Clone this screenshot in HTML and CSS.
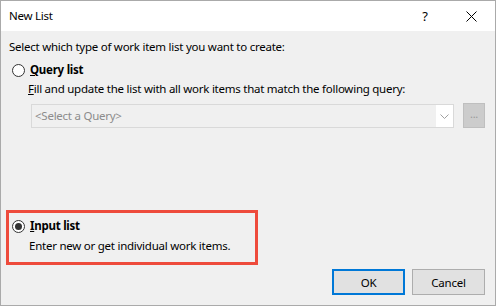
FILE: index.html
```html
<!DOCTYPE html>
<html>
<head>
<meta charset="utf-8">
<link rel="stylesheet" href="styles.css">
</head>
<body>
<div class="dialog">
  <div class="titlebar">
    <span class="title">New List</span>
    <span class="help">?</span>
    <span class="close">
      <svg width="11" height="11" viewBox="0 0 11 11"><path d="M0.5 0.5 L10.5 10.5 M10.5 0.5 L0.5 10.5" stroke="#000" stroke-width="1" fill="none"/></svg>
    </span>
  </div>
  <div class="content">
    <div class="intro">Select which type of work item list you want to create:</div>
    <div class="option">
      <span class="radio"></span>
      <span class="label"><u>Q</u>uery list</span>
    </div>
    <div class="sub">
      <div class="desc"><u>F</u>ill and update the list with all work items that match the following query:</div>
      <div class="query-row">
        <div class="combo">
          <span class="combo-text">&lt;Select a Query&gt;</span>
          <span class="combo-btn">
            <svg width="9" height="5" viewBox="0 0 9 5"><path d="M0.5 0.5 L4.5 4.5 L8.5 0.5" stroke="#a0a0a0" stroke-width="1" fill="none"/></svg>
          </span>
        </div>
        <div class="ellipsis">...</div>
      </div>
    </div>
    <div class="spacer"></div>
    <div class="highlight">
      <div class="option option-input">
        <span class="radio checked"></span>
        <span class="label"><u>I</u>nput list</span>
      </div>
      <div class="desc2">Enter new or get individual work items.</div>
    </div>
    <div class="buttons">
      <div class="btn btn-default">OK</div>
      <div class="btn">Cancel</div>
    </div>
  </div>
</div>
</body>
</html>
```

FILE: styles.css
```css
html, body {
  margin: 0;
  padding: 0;
}
body {
  width: 496px;
  height: 306px;
  font-family: "Noto Sans", "DejaVu Sans", sans-serif;
  font-size: 11.5px;
  letter-spacing: -0.25px;
  color: #000;
}
.dialog {
  box-sizing: border-box;
  width: 496px;
  height: 306px;
  border: 1px solid #aaaaaa;
  background: #f0f0f0;
  display: flex;
  flex-direction: column;
}
.titlebar {
  height: 30px;
  background: #fff;
  display: flex;
  align-items: center;
  padding-left: 8px;
  flex: none;
}
.title {
  flex: 1;
  line-height: 16px;
  margin-top: -1px;
}
.help {
  width: 14px;
  text-align: center;
  margin-right: 34px;
  font-size: 13px;
}
.close {
  display: flex;
  margin-right: 18px;
}
.content {
  flex: 1;
  display: flex;
  flex-direction: column;
  padding: 8px 10px 10px 8px;
}
.intro {
  line-height: 16px;
}
.option {
  display: flex;
  align-items: center;
  margin-top: 7px;
  padding-left: 3px;
  height: 16px;
}
.radio {
  box-sizing: border-box;
  width: 13px;
  height: 13px;
  border: 1px solid #333;
  border-radius: 50%;
  background: #fff;
  margin-right: 5px;
  display: flex;
  align-items: center;
  justify-content: center;
  flex: none;
}
.radio.checked::after {
  content: "";
  width: 7px;
  height: 7px;
  border-radius: 50%;
  background: #333;
}
.label {
  font-weight: bold;
  line-height: 16px;
}
.sub {
  margin-left: 19px;
  margin-top: 3px;
}
.desc {
  line-height: 16px;
}
.query-row {
  display: flex;
  margin-top: 7px;
  margin-left: 3px;
  align-items: flex-start;
}
.combo {
  box-sizing: border-box;
  width: 424px;
  height: 24px;
  border: 1px solid #d9d9d9;
  background: #f0f0f0;
  display: flex;
  align-items: stretch;
}
.combo-text {
  flex: 1;
  color: #8c8c8c;
  line-height: 22px;
  padding-left: 3px;
}
.combo-btn {
  width: 17px;
  background: #fff;
  display: flex;
  align-items: center;
  justify-content: center;
}
.ellipsis {
  box-sizing: border-box;
  width: 22px;
  height: 25px;
  margin-top: -1px;
  margin-left: 9px;
  background: #cccccc;
  border: 1px solid #bfbfbf;
  color: #9a9a9a;
  text-align: center;
  line-height: 20px;
  font-size: 11px;
}
.spacer {
  flex: 1;
}
.highlight {
  box-sizing: border-box;
  width: 252px;
  height: 55px;
  margin-left: -3px;
  border: 3px solid #ee4b3c;
  padding-top: 5px;
}
.option-input {
  margin-top: 0;
}
.desc2 {
  margin-left: 20px;
  margin-top: 4px;
  line-height: 16px;
}
.buttons {
  display: flex;
  justify-content: flex-end;
  gap: 7px;
  margin-top: 4px;
}
.btn {
  box-sizing: border-box;
  width: 73px;
  height: 26px;
  background: #e1e1e1;
  border: 1px solid #adadad;
  display: flex;
  align-items: center;
  justify-content: center;
}
.btn-default {
  border: 2px solid #0078d7;
}
```
